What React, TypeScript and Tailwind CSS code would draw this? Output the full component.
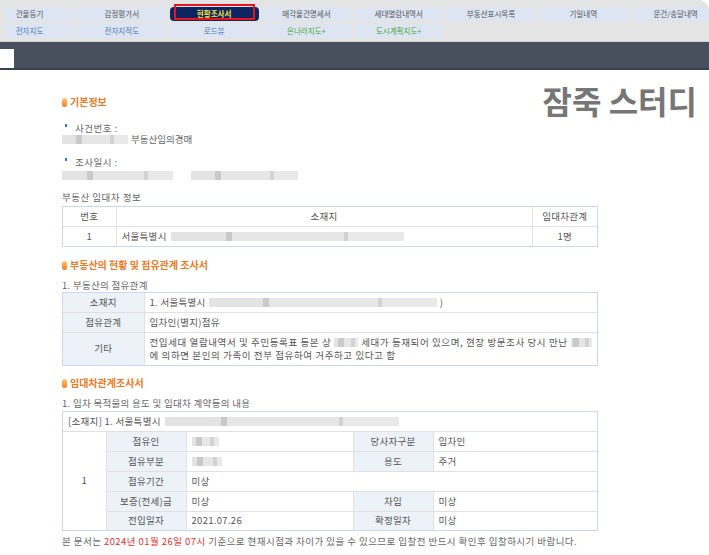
import React from "react";

const FONT = { fontFamily: '"Noto Sans CJK KR", "Noto Sans", sans-serif' };

type Tab = { label: string; color: string; active?: boolean };

const row1: Tab[] = [
  { label: "건물등기", color: "text-[#555]" },
  { label: "감정평가서", color: "text-[#555]" },
  { label: "현황조사서", color: "text-[#f2e23c]", active: true },
  { label: "매각물건명세서", color: "text-[#555]" },
  { label: "세대열람내역서", color: "text-[#555]" },
  { label: "부동산표시목록", color: "text-[#555]" },
  { label: "기일내역", color: "text-[#555]" },
  { label: "문건/송달내역", color: "text-[#555]" },
];

const row2: Tab[] = [
  { label: "전자지도", color: "text-[#4d78bd]" },
  { label: "전자지적도", color: "text-[#4d78bd]" },
  { label: "로드뷰", color: "text-[#4d78bd]" },
  { label: "온나라지도+", color: "text-[#4ea53a]" },
  { label: "도시계획지도+", color: "text-[#4ea53a]" },
];

function TabBtn({ t }: { t: Tab }) {
  return (
    <div
      className={`relative w-[89px] h-[14px] shrink-0 flex items-center justify-center text-[7.5px] leading-none ${
        t.active ? "bg-[#0d2562] font-bold rounded-[4px]" : "bg-[#dde5f2] rounded-[3px]"
      } ${t.color}`}
    >
      {t.label}
      {t.active && (
        <div className="absolute left-[4px] right-[4px] top-[-3px] bottom-[1px] border-2 border-[#e8141b]" />
      )}
    </div>
  );
}

function SectionTitle({ children }: { children: React.ReactNode }) {
  return (
    <div className="flex items-center h-[14px] gap-[3px]">
      <span className="w-[5px] h-[9px] rounded-full bg-linear-to-b from-[#ffc67a] to-[#f07c14]" />
      <span className="text-[10px] font-bold text-[#f07820] leading-none">{children}</span>
    </div>
  );
}

function Bullet({ children }: { children: React.ReactNode }) {
  return (
    <div className="flex h-[12px] items-center text-[9.5px] text-[#666] tracking-[0.5px]">
      <span className="w-[2px] h-[3px] bg-[#2c7bd6] ml-[3px] mr-[8px] -mt-[6px]" />
      {children}
    </div>
  );
}

function Blur({ className }: { className: string }) {
  return (
    <span className={`inline-flex align-middle h-[9px] blur-[0.6px] ${className}`}>
      <span className="flex-1 bg-[#e3e3e3]" />
      <span className="w-[6px] bg-[#c9c9c9]" />
      <span className="flex-[2] bg-[#e6e6e6]" />
      <span className="w-[4px] bg-[#d2d2d2]" />
      <span className="flex-1 bg-[#e9e9e9]" />
    </span>
  );
}

const td = "border border-[#e1e1e1] p-0 px-[5px] text-[9.5px] text-[#555] leading-[13px] tracking-[0.3px]";
const lab = "border border-[#e1e1e1] p-0 bg-[#edf2f9] text-center text-[9.5px] text-[#555] leading-[13px] tracking-[0.3px]";

export default function App() {
  return (
    <div className="relative w-[709px] h-[555px] overflow-hidden bg-white" style={FONT}>
      {/* top tab bar */}
      <div className="h-[42px] bg-[#e4e4e4] rounded-tr-[10px] pt-[3px] pl-[5px] border-b border-[#d2d2d2]">
        <div className="overflow-hidden flex flex-col gap-[3px] pt-[4px]">
          <div className="flex gap-[3.3px] ml-[-20px]">
            {row1.map((t) => (
              <TabBtn key={t.label} t={t} />
            ))}
          </div>
          <div className="flex gap-[3.3px] ml-[-20px]">
            {row2.map((t) => (
              <TabBtn key={t.label} t={t} />
            ))}
          </div>
        </div>
      </div>
      {/* dark band */}
      <div className="h-[28px] bg-[#48505e] border-b-2 border-[#39404b] flex">
        <div className="mt-auto w-[14px] h-[19px] bg-white" />
      </div>

      {/* watermark title */}
      <div className="absolute right-[12px] top-[84px] text-[32px] font-bold leading-none text-[#767676]">
        잠죽 스터디
      </div>

      {/* content */}
      <div className="ml-[62px] w-[536px] pt-[25px]">
        <SectionTitle>기본정보</SectionTitle>

        <div className="mt-[13px]">
          <Bullet>사건번호 :</Bullet>
          <div className="h-[10px] flex items-center text-[9.5px] text-[#666] gap-[3px]">
            <Blur className="w-[66px]" />
            <span>부동산임의경매</span>
          </div>
        </div>

        <div className="mt-[12px]">
          <Bullet>조사일시 :</Bullet>
          <div className="mt-[2px] h-[10px] flex items-center gap-[18px]">
            <Blur className="w-[111px]" />
            <Blur className="w-[107px]" />
          </div>
        </div>

        <div className="mt-[11px] h-[12px] flex items-center text-[9.5px] text-[#666] tracking-[0.5px]">
          부동산 임대차 정보
        </div>

        <div className="mt-[3px] border border-[#c8d8ee]">
          <table className="w-full table-fixed border-collapse border-hidden">
            <colgroup>
              <col className="w-[53px]" />
              <col />
              <col className="w-[65px]" />
            </colgroup>
            <tbody>
              <tr className="h-[19px]">
                <td className={`${td} text-center`}>번호</td>
                <td className={`${td} text-center`}>소재지</td>
                <td className={`${td} text-center`}>임대차관계</td>
              </tr>
              <tr className="h-[20px]">
                <td className={`${td} text-center`}>1</td>
                <td className={td}>
                  <span className="inline-flex items-center gap-[4px]">
                    서울특별시 <Blur className="w-[233px]" />
                  </span>
                </td>
                <td className={`${td} text-center`}>1명</td>
              </tr>
            </tbody>
          </table>
        </div>

        <div className="mt-[11px]">
          <SectionTitle>부동산의 현황 및 점유관계 조사서</SectionTitle>
        </div>
        <div className="mt-[6px] h-[14px] flex items-center text-[9.5px] text-[#666] tracking-[0.3px]">
          1. 부동산의 점유관계
        </div>

        <div className="border border-[#c8d8ee]">
          <table className="w-full table-fixed border-collapse border-hidden">
            <colgroup>
              <col className="w-[81px]" />
              <col />
            </colgroup>
            <tbody>
              <tr className="h-[19px]">
                <td className={lab}>소재지</td>
                <td className={td}>
                  <span className="inline-flex items-center gap-[3px]">
                    1. 서울특별시 <Blur className="w-[228px]" />)
                  </span>
                </td>
              </tr>
              <tr className="h-[20px]">
                <td className={lab}>점유관계</td>
                <td className={td}>임차인(별지)점유</td>
              </tr>
              <tr className="h-[33px]">
                <td className={lab}>기타</td>
                <td className={`${td} tracking-[0.6px]`}>
                  <div className="whitespace-nowrap flex items-center gap-[3px]">
                    <span>전입세대 열람내역서 및 주민등록표 등본 상</span>
                    <Blur className="w-[29px]" />
                    <span>세대가 등재되어 있으며, 현장 방문조사 당시 만난</span>
                    <Blur className="w-[26px]" />
                  </div>
                  <div className="whitespace-nowrap">에 의하면 본인의 가족이 전부 점유하여 거주하고 있다고 함</div>
                </td>
              </tr>
            </tbody>
          </table>
        </div>

        <div className="mt-[10px]">
          <SectionTitle>임대차관계조사서</SectionTitle>
        </div>
        <div className="mt-[6px] h-[14px] flex items-center text-[9.5px] text-[#666] tracking-[0.3px]">
          1. 임차 목적물의 용도 및 임대차 계약등의 내용
        </div>

        <div className="mt-[1px] border border-[#c8d8ee]">
          <table className="w-full table-fixed border-collapse border-hidden">
            <colgroup>
              <col className="w-[43px]" />
              <col className="w-[80px]" />
              <col className="w-[167px]" />
              <col className="w-[80px]" />
              <col />
            </colgroup>
            <tbody>
              <tr className="h-[19px]">
                <td colSpan={5} className={td}>
                  <span className="inline-flex items-center gap-[4px]">
                    [소재지] 1. 서울특별시 <Blur className="w-[234px]" />
                  </span>
                </td>
              </tr>
              <tr className="h-[20px]">
                <td rowSpan={5} className={`${td} text-center`}>
                  1
                </td>
                <td className={lab}>점유인</td>
                <td className={td}>
                  <Blur className="w-[27px]" />
                </td>
                <td className={lab}>당사자구분</td>
                <td className={td}>임차인</td>
              </tr>
              <tr className="h-[20px]">
                <td className={lab}>점유부분</td>
                <td className={td}>
                  <Blur className="w-[30px]" />
                </td>
                <td className={lab}>용도</td>
                <td className={td}>주거</td>
              </tr>
              <tr className="h-[20px]">
                <td className={lab}>점유기간</td>
                <td colSpan={3} className={td}>
                  미상
                </td>
              </tr>
              <tr className="h-[20px]">
                <td className={lab}>보증(전세)금</td>
                <td className={td}>미상</td>
                <td className={lab}>차임</td>
                <td className={td}>미상</td>
              </tr>
              <tr className="h-[19px]">
                <td className={lab}>전입일자</td>
                <td className={td}>2021.07.26</td>
                <td className={lab}>확정일자</td>
                <td className={td}>미상</td>
              </tr>
            </tbody>
          </table>
        </div>

        <div className="mt-[3px] h-[14px] flex items-center whitespace-nowrap text-[9.5px] text-[#666] tracking-[0.45px]">
          본 문서는&nbsp;<span className="text-[#ee2f2f]">2024년 01월 26일 07시</span>&nbsp;기준으로 현재시점과 차이가 있을 수
          있으므로 입찰전 반드시 확인후 입찰하시기 바랍니다.
        </div>
      </div>
    </div>
  );
}
